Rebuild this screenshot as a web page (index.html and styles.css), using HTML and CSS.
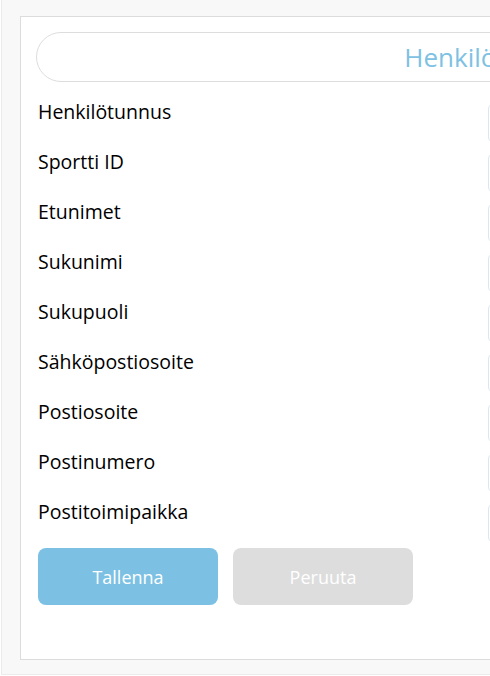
FILE: index.html
```html
<!DOCTYPE html>
<html lang="fi">
<head>
<meta charset="utf-8">
<title>Henkilötiedot</title>
<link rel="stylesheet" href="styles.css">
</head>
<body>
<div class="frame">
  <div class="panel">
    <div class="title-pill"><span class="title">Henkilötiedot</span></div>
    <form class="form">
      <div class="row"><label class="label">Henkilötunnus</label><input class="field" type="text"></div>
      <div class="row"><label class="label">Sportti ID</label><input class="field" type="text"></div>
      <div class="row"><label class="label">Etunimet</label><input class="field" type="text"></div>
      <div class="row"><label class="label">Sukunimi</label><input class="field" type="text"></div>
      <div class="row"><label class="label">Sukupuoli</label><input class="field" type="text"></div>
      <div class="row"><label class="label">Sähköpostiosoite</label><input class="field" type="text"></div>
      <div class="row"><label class="label">Postiosoite</label><input class="field" type="text"></div>
      <div class="row"><label class="label">Postinumero</label><input class="field" type="text"></div>
      <div class="row"><label class="label">Postitoimipaikka</label><input class="field" type="text"></div>
      <div class="actions">
        <button type="button" class="btn btn-primary">Tallenna</button>
        <button type="button" class="btn btn-secondary">Peruuta</button>
      </div>
    </form>
  </div>
</div>
</body>
</html>
```
FILE: styles.css
```css
html, body {
  margin: 0;
  padding: 0;
  width: 490px;
  height: 676px;
  overflow: hidden;
  background: #ffffff;
  font-family: "Open Sans", "Noto Sans", sans-serif;
}

.frame {
  margin-left: 1px;
  width: 1000px;
  height: 675px;
  box-sizing: border-box;
  background: #f8f8f8;
  border-left: 1px solid #ebebeb;
  border-bottom: 1px solid #ebebeb;
  padding: 16px 0 0 18px;
}

.panel {
  width: 960px;
  height: 644px;
  box-sizing: border-box;
  background: #ffffff;
  border: 1px solid #dcdcdc;
  padding: 15px 0 0 15px;
}

.title-pill {
  width: 900px;
  height: 50px;
  box-sizing: border-box;
  border: 1px solid #dddddd;
  border-radius: 25px;
  display: flex;
  align-items: center;
  justify-content: center;
}

.title {
  color: #7dc1e3;
  font-size: 26px;
  letter-spacing: 0;
}

.form {
  margin-top: 21px;
  display: flex;
  flex-direction: column;
  gap: 10px;
}

.row {
  display: grid;
  grid-template-columns: 452px 400px;
  height: 40px;
}

.label {
  padding-left: 2px;
  font-size: 19.5px;
  color: #000000;
  line-height: 18px;
}

.field {
  height: 40px;
  box-sizing: border-box;
  border: 1px solid #dde6ef;
  border-radius: 6px;
  background: #ffffff;
  margin: 0;
}

.actions {
  margin-top: -5px;
  padding-left: 2px;
  display: flex;
  gap: 15px;
}

.btn {
  width: 180px;
  height: 57px;
  border: none;
  border-radius: 8px;
  color: #ffffff;
  font-family: inherit;
  font-size: 18px;
}

.btn-primary {
  background: #7cc1e3;
}

.btn-secondary {
  background: #dddddd;
}
```
